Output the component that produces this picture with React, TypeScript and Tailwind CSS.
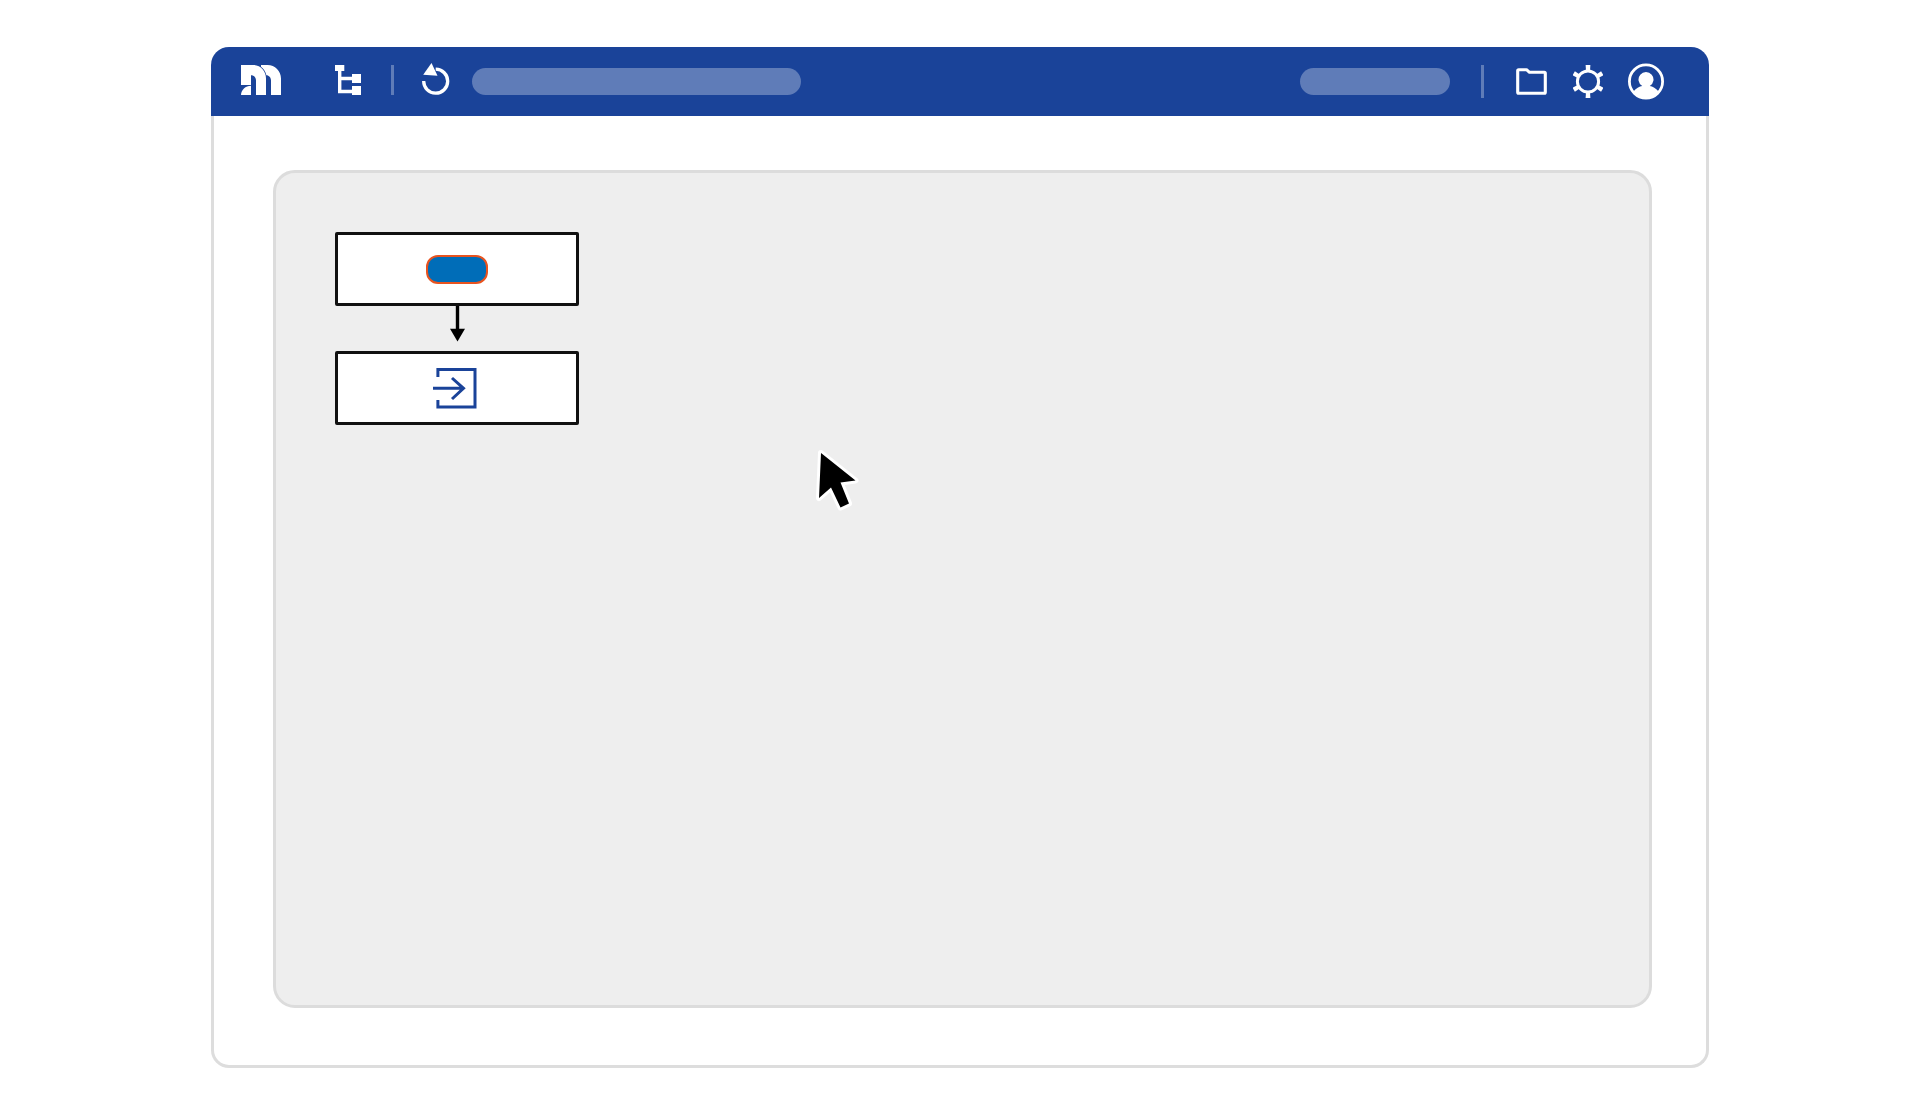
import React from "react";

const LogoMark: React.FC = () => (
  <svg width="40" height="33" viewBox="0 0 40 33" fill="#fff" aria-hidden="true">
    <path d="M0 0h12C19.500 0 25 6 25 13.500V30H15V15.500C15 12.500 13 10.300 10 10.300V20H0z" />
    <path d="M0 30C0 25 4.500 20.700 10 20.700V30z" />
    <path d="M20 0h6.500C34 0 40 6 40 13.500V30H30V15.500C30 12.600 28 10.300 25.400 10.300C24.600 6.800 22.800 3.600 20 1.700z" />
  </svg>
);

const TreeIcon: React.FC = () => (
  <svg width="26" height="33" viewBox="0 0 26 33" aria-hidden="true">
    <path d="M4.700 6V26.500H17M4.700 13.500H17" fill="none" stroke="#fff" strokeWidth="3.400" />
    <path d="M0 0h9.300v6H0zM17 9h9v9h-9zM17 21h9v9h-9z" fill="#fff" />
  </svg>
);

const ReloadIcon: React.FC = () => (
  <svg width="28" height="37" viewBox="0 0 28 37" aria-hidden="true">
    <path d="M1.700 18A12 12 0 1 0 13.700 6.200" fill="none" stroke="#fff" strokeWidth="3.300" />
    <path d="M9.500 0L15.500 12.700L1.200 11.700z" fill="#fff" />
  </svg>
);

const FolderIcon: React.FC = () => (
  <svg width="31" height="33" viewBox="0 0 31 33" aria-hidden="true">
    <path
      d="M2.700 4.700H10.500L13.500 7.300H28.300Q29.300 7.300 29.300 8.300V27.300Q29.300 28.300 28.300 28.300H2.700Q1.700 28.300 1.700 27.300V5.700Q1.700 4.700 2.700 4.700z"
      fill="none"
      stroke="#fff"
      strokeWidth="3.100"
      strokeLinejoin="round"
    />
  </svg>
);

const GearIcon: React.FC = () => (
  <svg width="30" height="33" viewBox="0 0 30 33" aria-hidden="true">
    <circle cx="15" cy="16.500" r="10.600" fill="none" stroke="#fff" strokeWidth="3" />
    {[0, 60, 120, 180, 240, 300].map((deg) => (
      <path key={deg} d="M12.600 0H17.400L17 5.800H13z" fill="#fff" transform={`rotate(${deg} 15 16.500)`} />
    ))}
  </svg>
);

const UserIcon: React.FC = () => (
  <svg width="36" height="37" viewBox="0 0 36 37" aria-hidden="true">
    <circle cx="18" cy="18.500" r="16.600" fill="none" stroke="#fff" strokeWidth="2.800" />
    <path d="M5 29C8 25.200 11.500 23.500 14.200 23A7.500 7.500 0 1 1 21.800 23C24.500 23.500 28 25.200 31 29A17 17 0 0 1 5 29z" fill="#fff" />
  </svg>
);

const EnterIcon: React.FC = () => (
  <svg width="48" height="41" viewBox="0 0 48 41" fill="none" stroke="#1a4399" strokeWidth="3" aria-hidden="true">
    <path d="M4.900 9V1.500H42V39H4.900V32M0 20.300H30M19 10L30.500 20.300L19 31" />
  </svg>
);

const ConnectorArrow: React.FC = () => (
  <svg width="15" height="45" viewBox="0 0 15 45" aria-hidden="true">
    <path d="M7.500 0V24" stroke="#000" strokeWidth="3.400" />
    <path d="M0 22.700H15L7.500 35.500z" fill="#000" />
  </svg>
);

const Pointer: React.FC<{ className: string }> = ({ className }) => (
  <svg width="60" height="72" viewBox="0 0 60 72" className={className} aria-hidden="true">
    <path
      d="M9 9L43.500 36.500L28.500 38.500L37 59.500L28.500 63.500L19 43.500L7 54z"
      fill="#000"
      stroke="#fff"
      strokeWidth="6"
      strokeLinejoin="round"
      paintOrder="stroke"
    />
  </svg>
);

const FlowNode: React.FC<{ children: React.ReactNode }> = ({ children }) => (
  <div className="flex h-[74px] w-full items-center justify-center rounded-xs border-3 border-[#111] bg-white">
    {children}
  </div>
);

const App: React.FC = () => (
  <div className="flex min-h-screen flex-col bg-white px-[211px] pt-[47px] pb-[46px]">
    {/* Title bar */}
    <header className="flex h-[69px] items-center rounded-t-[18px] bg-[#1a4399] pr-[45px] pl-[30px]">
      <a href="#" aria-label="Home">
        <LogoMark />
      </a>
      <button type="button" aria-label="Structure" className="ml-[54px]">
        <TreeIcon />
      </button>
      <div className="mb-[3px] ml-[30px] h-[30px] w-[3px] bg-[#5f7cb8]" />
      <button type="button" aria-label="Reload" className="ml-[28px]">
        <ReloadIcon />
      </button>
      <div className="ml-[22px] h-[27px] w-[329px] rounded-full bg-[#5f7cb8]" />

      <div className="ml-auto h-[27px] w-[150px] rounded-full bg-[#5f7cb8]" />
      <div className="ml-[31px] h-[33px] w-[3px] bg-[#5f7cb8]" />
      <button type="button" aria-label="Files" className="ml-[32px]">
        <FolderIcon />
      </button>
      <button type="button" aria-label="Settings" className="ml-[26px]">
        <GearIcon />
      </button>
      <button type="button" aria-label="Account" className="ml-[25px]">
        <UserIcon />
      </button>
    </header>

    <main className="flex flex-1 rounded-b-[18px] border-x-3 border-b-3 border-[#ddd] pt-[54px] pr-[54px] pb-[57px] pl-[59px]">
      {/* Canvas */}
      <div className="relative flex-1 rounded-[22px] border-3 border-[#dcdcdc] bg-[#eee] p-[59px]">
        <div className="flex w-[244px] flex-col items-center">
          <FlowNode>
            <div className="h-[29px] w-[62px] rounded-xl border-2 border-[#e8531f] bg-[#006db8]" />
          </FlowNode>
          <ConnectorArrow />
          <FlowNode>
            <EnterIcon />
          </FlowNode>
        </div>
        <Pointer className="absolute top-[271px] left-[536px]" />
      </div>
    </main>
  </div>
);

export default App;
